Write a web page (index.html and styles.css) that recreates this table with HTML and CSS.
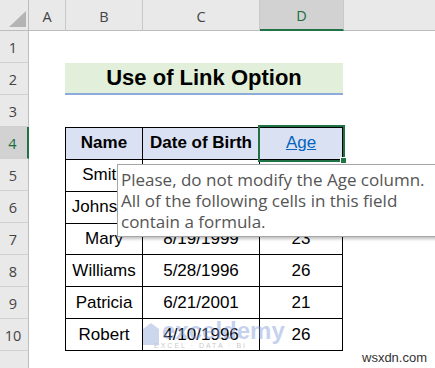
FILE: index.html
```html
<!DOCTYPE html>
<html>
<head>
<meta charset="utf-8">
<link rel="stylesheet" href="styles.css">
</head>
<body>
<div class="sheet">
  <div class="colheads">
    <div class="corner"><svg width="28" height="30" viewBox="0 0 28 30"><polygon points="9,27 26,27 26,11" fill="#b4b4b4"/></svg></div>
    <div class="ch ch-a">A</div>
    <div class="ch ch-b">B</div>
    <div class="ch ch-c">C</div>
    <div class="ch ch-d active">D</div>
    <div class="ch ch-rest"></div>
  </div>
  <div class="body">
    <div class="rowheads">
      <div class="rh">1</div>
      <div class="rh">2</div>
      <div class="rh">3</div>
      <div class="rh active">4</div>
      <div class="rh">5</div>
      <div class="rh">6</div>
      <div class="rh">7</div>
      <div class="rh">8</div>
      <div class="rh">9</div>
      <div class="rh">10</div>
      <div class="rh rh-rest"></div>
    </div>
    <div class="canvas">
      <div class="title">Use of Link Option</div>
      <div class="table">
        <div class="cell hd">Name</div>
        <div class="cell hd">Date of Birth</div>
        <div class="cell hd sel"><a class="link">Age</a><span class="selbox"></span><span class="handle"></span></div>

        <div class="cell">Smith</div>
        <div class="cell">3/12/1995</div>
        <div class="cell">27</div>

        <div class="cell">Johnson</div>
        <div class="cell">9/15/1997</div>
        <div class="cell">25</div>

        <div class="cell">Mary</div>
        <div class="cell">8/19/1999</div>
        <div class="cell">23</div>

        <div class="cell">Williams</div>
        <div class="cell">5/28/1996</div>
        <div class="cell">26</div>

        <div class="cell">Patricia</div>
        <div class="cell">6/21/2001</div>
        <div class="cell">21</div>

        <div class="cell">Robert</div>
        <div class="cell">4/10/1996</div>
        <div class="cell">26</div>
      </div>
    </div>
  </div>

  <div class="tooltip">Please, do not modify the Age column.<br>All of the following cells in this field<br>contain a formula.</div>

  <div class="wm">
    <svg class="wm-icon" width="16" height="22" viewBox="0 0 16 22"><polygon points="0,6 8,0 16,6 16,22 0,22" fill="#8fa6d8"/></svg>
    <div class="wm-text">
      <span class="wm-name">exceldemy</span>
      <span class="wm-sub">EXCEL · DATA · BI</span>
    </div>
  </div>

  <div class="site">wsxdn.com</div>
</div>
</body>
</html>
```

FILE: styles.css
```css
html, body {
  margin: 0;
  padding: 0;
  background: #ffffff;
}

.sheet {
  position: relative;
  width: 435px;
  height: 368px;
  overflow: hidden;
  background: #ffffff;
}

/* column headers */
.colheads {
  display: flex;
  height: 31px;
}

.corner,
.ch {
  box-sizing: border-box;
  height: 31px;
  background: #e9e9e9;
  border-bottom: 1px solid #bdbdbd;
  border-right: 1px solid #c8c8c8;
  font: 14.5px "Open Sans", sans-serif;
  color: #444444;
  display: flex;
  align-items: center;
  justify-content: center;
  padding-top: 2px;
}

.corner {
  width: 29px;
  padding: 0;
  align-items: flex-start;
  justify-content: flex-start;
  border-right-color: #bdbdbd;
}

.ch-a { width: 37px; }
.ch-b { width: 77px; }
.ch-c { width: 117px; }
.ch-d { width: 84px; }
.ch-rest { flex: 1; border-right: none; }

.ch.active {
  background: #d2d2d2;
  color: #1d6a3f;
  border-bottom: 2px solid #217346;
}

/* body */
.body {
  display: flex;
  height: 337px;
}

.rowheads {
  display: flex;
  flex-direction: column;
  width: 29px;
}

.rh {
  box-sizing: border-box;
  height: 32px;
  background: #e9e9e9;
  border-right: 1px solid #bdbdbd;
  border-bottom: 1px solid #d0d0d0;
  font: 14.5px "Open Sans", sans-serif;
  color: #444444;
  display: flex;
  align-items: center;
  justify-content: center;
  padding-top: 2px;
  padding-right: 2px;
}

.rh.active {
  background: #d2d2d2;
  color: #1d6a3f;
  border-right: 2px solid #217346;
}

.rh-rest {
  flex: 1;
  border-bottom: none;
}

.canvas {
  flex: 1;
  display: grid;
  grid-template-columns: 36px 278px 1fr;
  grid-template-rows: repeat(10, 32px) 1fr;
}

.title {
  grid-column: 2;
  grid-row: 2;
  box-sizing: border-box;
  background: #e2efda;
  border-bottom: 2px solid #8eaadb;
  display: flex;
  align-items: center;
  justify-content: center;
  font: bold 22px "Liberation Sans", Arial, sans-serif;
  color: #000000;
}

.table {
  grid-column: 2;
  grid-row: 4 / 11;
  box-sizing: border-box;
  display: grid;
  grid-template-columns: 76px 116px 82px;
  grid-template-rows: repeat(7, 1fr);
  gap: 1px;
  background: #000000;
  border: 1px solid #000000;
}

.cell {
  background: #ffffff;
  display: flex;
  align-items: center;
  justify-content: center;
  font: 17px "Liberation Sans", Arial, sans-serif;
  color: #000000;
}

.cell.hd {
  background: #d9e1f2;
  font-weight: bold;
}

.sel {
  position: relative;
}

.link {
  color: #0563c1;
  text-decoration: underline;
  font-weight: normal;
}

.selbox {
  position: absolute;
  top: -3px;
  left: -2px;
  right: -3px;
  bottom: -3px;
  border: 2px solid #217346;
}

.handle {
  position: absolute;
  right: -5px;
  bottom: -5px;
  width: 5px;
  height: 5px;
  background: #217346;
  border: 1px solid #ffffff;
}

/* tooltip */
.tooltip {
  position: absolute;
  left: 117px;
  top: 164px;
  width: 330px;
  height: 73px;
  box-sizing: border-box;
  background: #ffffff;
  border: 1px solid #a6a6a6;
  box-shadow: 2px 2px 3px rgba(0, 0, 0, 0.25);
  padding: 4px 0 0 3px;
  font: 17px "Open Sans", sans-serif;
  line-height: 21px;
  color: #555555;
  white-space: nowrap;
}

/* watermark */
.wm {
  position: absolute;
  left: 143px;
  top: 320px;
  display: flex;
  align-items: flex-start;
  gap: 3px;
  opacity: 0.45;
  pointer-events: none;
}

.wm-icon {
  margin-top: 3px;
}

.wm-text {
  display: flex;
  flex-direction: column;
  align-items: flex-start;
}

.wm-name {
  font: bold 24px "Liberation Sans", Arial, sans-serif;
  line-height: 22px;
  color: #7f9bd9;
}

.wm-sub {
  font: 7px "Liberation Sans", Arial, sans-serif;
  letter-spacing: 2px;
  color: #888888;
  margin-left: -8px;
}

.site {
  position: absolute;
  left: 362px;
  top: 350px;
  font: 13px "Liberation Sans", Arial, sans-serif;
  line-height: 16px;
  color: #333333;
}
```
